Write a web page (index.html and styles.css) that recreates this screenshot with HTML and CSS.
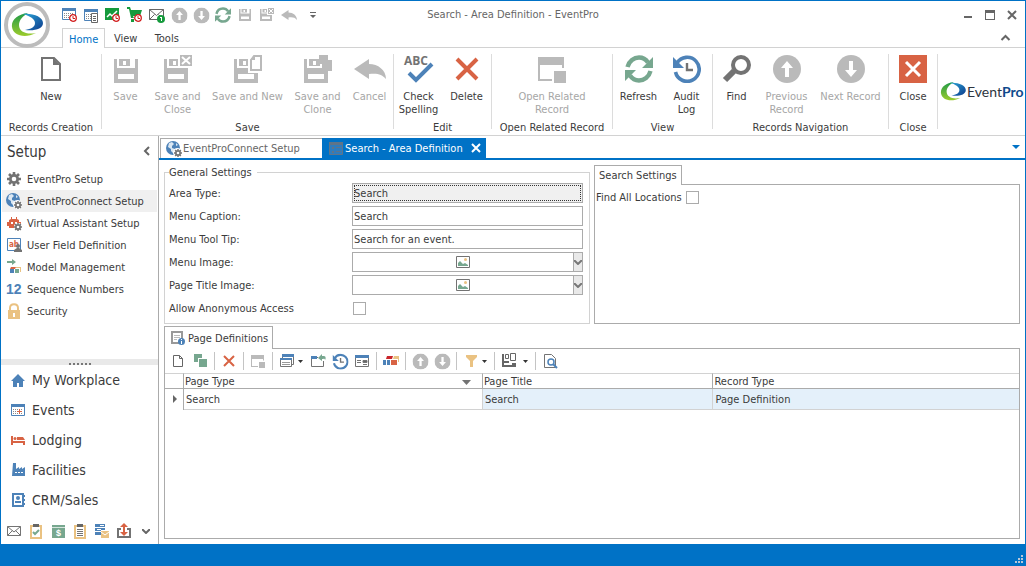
FILE: index.html
```html
<!DOCTYPE html>
<html lang="en">
<head>
  <meta charset="UTF-8" />
  <title>Search - Area Definition - EventPro</title>
  <meta name="viewport" content="width=device-width, initial-scale=1.0" />
  <link rel="stylesheet" href="styles.css">
</head>
<body>
  <!-- shared icons -->
  <svg class="sprite" aria-hidden="true">
    <defs>
      <linearGradient id="gGreen" x1="0" y1="0" x2="0" y2="1"><stop offset="0" stop-color="#1f9a48"/><stop offset="1" stop-color="#9bcb2c"/></linearGradient>
      <linearGradient id="gBlue" x1="0" y1="0" x2="1" y2="1"><stop offset="0" stop-color="#2ba6d8"/><stop offset="1" stop-color="#0d3b8c"/></linearGradient>
    </defs>
    <symbol id="swoosh" viewBox="0 0 32 25">
      <path fill="url(#gGreen)" d="M17 0C7 1 0 7 1 14c1 8 12 12 24 6C16 22 8 19 8 12 8 7 12 3 17 0z"/>
      <path fill="url(#gBlue)" d="M12 1c10-1 20 3 20 9 0 6-8 8-18 7 6-1 10-3 10-7 0-4-5-7-12-9z"/>
    </symbol>
    <symbol id="floppy" viewBox="0 0 24 24">
      <path d="M0 0h3v9h18V0h3v24H0zM4 15v5h16v-5z"/>
      <path d="M5 0h11v7H5zM9 2v4h3V2z" fill-rule="evenodd"/>
    </symbol>
    <symbol id="page" viewBox="0 0 20 24"><path fill="none" stroke="currentColor" stroke-width="2" d="M1 1h12l6 6v16H1z"/><path d="M12 1v7h7z"/></symbol>
    <symbol id="cross" viewBox="0 0 24 24"><path fill="none" stroke="currentColor" stroke-width="4" d="M2 2l20 20M22 2L2 22"/></symbol>
    <symbol id="undo" viewBox="0 0 32 20"><path d="M0 10L15 0v5c9 0 17 6 17 15-4-5-9-6-17-5v5z"/></symbol>
    <symbol id="refresh" viewBox="0 0 28 28">
      <path fill="none" stroke="currentColor" stroke-width="4.4" d="M2.500 12C4 6 9 2.500 14 2.500c4 0 7 2 9 5M25.500 16C24 22 19 25.500 14 25.500c-4 0-7-2-9-5"/>
      <path d="M28 2v11H17zM0 26V15h11z"/>
    </symbol>
    <symbol id="history" viewBox="0 0 28 28">
      <path fill="none" stroke="currentColor" stroke-width="3.600" d="M4 8a12 12 0 1 1-1.500 9"/>
      <path d="M0 2v11h11z"/><path fill="none" stroke="#737373" stroke-width="2.400" d="M14 8v7h6"/>
    </symbol>
    <symbol id="up" viewBox="0 0 28 28"><circle cx="14" cy="14" r="14"/><path fill="#fff" d="M14 6l6 7h-4v9h-4v-9H8z"/></symbol>
    <symbol id="down" viewBox="0 0 28 28"><circle cx="14" cy="14" r="14"/><path fill="#fff" d="M14 22l6-7h-4V6h-4v9H8z"/></symbol>
    <symbol id="related" viewBox="0 0 28 26"><path d="M0 0h26v11h-2V8H2v14h12v2H0z"/><path d="M16 14h12v12H16z"/></symbol>
    <symbol id="calendar" viewBox="0 0 14 12">
      <path fill="#4d82b8" d="M0 0h14v3H0z"/><path fill="none" stroke="#4d82b8" d="M.5.500h13v11H.5z"/>
      <path stroke="#8a8a8a" stroke-dasharray="1 1" d="M2 5.500h10M2 7.500h10M2 9.500h10"/>
    </symbol>
    <symbol id="clock" viewBox="0 0 8 8"><circle cx="4" cy="4" r="3.300" fill="#fff" stroke="#d11c1c" stroke-width="1.300"/><path fill="none" stroke="#d11c1c" d="M4 2v2.500h2"/></symbol>
    <symbol id="gear" viewBox="0 0 14 14">
      <path fill="none" stroke="currentColor" stroke-width="2.600" d="M7 0v14M0 7h14M2 2l10 10M12 2L2 12"/>
      <circle cx="7" cy="7" r="5"/><circle cx="7" cy="7" r="2.300" fill="#fff"/>
    </symbol>
    <symbol id="globe" viewBox="0 0 16 16">
      <circle cx="7" cy="7" r="7" fill="#4d82b8"/>
      <path fill="#dbe7f2" d="M3 2l3-1 2 2-2 2v2l3 1-2 4-2-2V8L2 6zM10 2l2 2-2 1z"/>
      <circle cx="11.500" cy="11.500" r="4.500" fill="#fff"/>
      <svg x="8" y="8" width="8" height="8" color="#737373" fill="#737373"><use href="#gear"/></svg>
    </symbol>
    <symbol id="picture" viewBox="0 0 14 12">
      <path fill="#fff" stroke="#737373" d="M.5.500h13v11H.5z"/><path fill="#77a78f" d="M2 10V7l2-2 3 3 2-1 3 2v1z"/><circle cx="9.500" cy="3.500" r="1.500" fill="#eac282"/>
    </symbol>
    <symbol id="caret" viewBox="0 0 8 5"><path fill="none" stroke="currentColor" stroke-width="2" d="M0 0l4 4 4-4"/></symbol>
  </svg>

  <div class="window">
    <header class="titlebar">
      <button class="app-button" aria-label="Application menu"><svg width="32" height="25"><use href="#swoosh"/></svg></button>
      <div class="quick-access">
        <button aria-label="Calendar"><svg viewBox="0 0 16 16"><use href="#calendar" x="1" y="1" width="14" height="12"/><use href="#clock" x="8" y="7" width="8" height="8"/></svg></button>
        <button aria-label="Event list"><svg viewBox="0 0 16 16"><use href="#calendar" x="1" y="2" width="14" height="12"/><path fill="#fff" stroke="#666" d="M8.500 6.500h6v9h-6z"/><path stroke="#666" d="M10 9.500h3M10 11.500h3M10 13.500h3"/></svg></button>
        <button aria-label="Sales"><svg viewBox="0 0 16 16"><path fill="#159a3c" d="M0 1h14v12H0z"/><path fill="none" stroke="#fff" stroke-width="1.500" d="M2 10l3-3 2 2 5-5"/><use href="#clock" x="7" y="7" width="8" height="8"/></svg></button>
        <button aria-label="Orders"><svg viewBox="0 0 16 16"><path fill="#159a3c" d="M0 0h3l1 3h11l-2 6H6L7 11H4L2 2H0zM4 12h3v3H4z"/><use href="#clock" x="7" y="7" width="8" height="8"/></svg></button>
        <button aria-label="Messages"><svg viewBox="0 0 16 16"><path fill="#fff" stroke="#666" d="M.5 2.500h14v10H.5zM.5 2.500l7 6 7-6M.5 12.500l5-5M14.500 12.500l-5-5"/><circle cx="12" cy="12" r="4" fill="#159a3c"/><path stroke="#fff" d="M12.500 10v4M11 10.500h1.500"/></svg></button>
        <button class="off" aria-label="Previous"><svg viewBox="-1 -1 30 30"><use href="#up"/></svg></button>
        <button class="off" aria-label="Next"><svg viewBox="-1 -1 30 30"><use href="#down"/></svg></button>
        <button class="green" aria-label="Refresh"><svg viewBox="0 0 28 28"><use href="#refresh"/></svg></button>
        <button class="off" aria-label="Save"><svg viewBox="0 0 16 16"><use href="#floppy" x="2" y="2" width="12" height="12"/></svg></button>
        <button class="off" aria-label="Save and close"><svg viewBox="0 0 16 16"><use href="#floppy" x="1" y="2" width="12" height="12"/><path fill="#fff" d="M8 0h8v8H8z"/><path d="M9 1h6v6H9z"/><path stroke="#fff" d="M10 2l4 4M14 2l-4 4"/></svg></button>
        <button class="off" aria-label="Undo"><svg viewBox="0 0 16 16"><use href="#undo" x="0" y="3" width="16" height="10"/></svg></button>
        <button class="customize" aria-label="Customize"><svg viewBox="0 0 16 16"><path d="M5 5h6v1H5zM5 8h6l-3 3z"/></svg></button>
      </div>
      <div class="title">Search - Area Definition - EventPro</div>
      <div class="window-buttons">
        <button aria-label="Minimize"><svg viewBox="0 0 12 12"><path d="M2 7h8v2H2z"/></svg></button>
        <button aria-label="Maximize"><svg viewBox="0 0 12 12"><path d="M1 1h10v10H1zM2 4v6h8V4z" fill-rule="evenodd"/></svg></button>
        <button aria-label="Close window"><svg viewBox="0 0 12 12"><path stroke="currentColor" stroke-width="2" d="M2 2l8 8M10 2l-8 8"/></svg></button>
      </div>
    </header>

    <nav class="ribbon-tabs">
      <button class="active">Home</button>
      <button>View</button>
      <button>Tools</button>
      <button class="collapse" aria-label="Collapse ribbon"><svg width="9" height="6" viewBox="0 0 9 6"><path fill="none" stroke="currentColor" stroke-width="2" d="M.5 5l4-4 4 4"/></svg></button>
    </nav>

    <div class="ribbon">
      <section class="group group-new">
        <div class="buttons">
          <button class="sm"><svg width="28" height="28" viewBox="0 0 28 28"><use href="#page" x="4" y="2" width="20" height="24"/></svg>New</button>
        </div>
        <h2>Records Creation</h2>
      </section>
      <section class="group group-save">
        <div class="buttons">
          <button class="sm off"><svg width="28" height="28"><use href="#floppy" x="2" y="4" width="24" height="24"/></svg>Save</button>
          <button class="md off"><svg width="28" height="28"><use href="#floppy" x="0" y="4" width="24" height="24"/><path fill="#fff" d="M14 0h14v13H14z"/><path d="M16 0h12v11H16z"/><path stroke="#fff" stroke-width="2" d="M18 2l8 7M26 2l-8 7"/></svg>Save and Close</button>
          <button class="lg off"><svg width="28" height="28"><use href="#floppy" x="0" y="4" width="24" height="24"/><path fill="#fff" d="M14 0h14v18H14z"/><path fill="#fff" stroke="currentColor" stroke-width="2" d="M20 1h7v14H17V5z"/><path d="M16 5h5V0z"/></svg>Save and New</button>
          <button class="md off"><svg width="28" height="28"><use href="#floppy" x="0" y="4" width="24" height="24"/><path d="M15 0h9v5h4v11H18v-7h-3z"/></svg>Save and Clone</button>
          <button class="sm off"><svg width="32" height="28"><use href="#undo" x="0" y="4" width="32" height="20"/></svg>Cancel</button>
        </div>
        <h2>Save</h2>
      </section>
      <section class="group group-edit">
        <div class="buttons">
          <button class="sm"><svg width="30" height="28"><text class="abc" x="0" y="10">ABC</text><path fill="none" stroke="#4d82b8" stroke-width="4" d="M5 18l7 7L28 9"/></svg>Check Spelling</button>
          <button class="sm"><svg class="red" width="28" height="28"><use href="#cross" x="2" y="2" width="24" height="24"/></svg>Delete</button>
        </div>
        <h2>Edit</h2>
      </section>
      <section class="group group-related">
        <div class="buttons">
          <button class="lg off"><svg width="28" height="28"><use href="#related" x="0" y="2" width="28" height="26"/></svg>Open Related Record</button>
        </div>
        <h2>Open Related Record</h2>
      </section>
      <section class="group group-view">
        <div class="buttons">
          <button class="sm"><svg class="green" width="28" height="28"><use href="#refresh"/></svg>Refresh</button>
          <button class="sm"><svg class="blue" width="28" height="28"><use href="#history"/></svg>Audit Log</button>
        </div>
        <h2>View</h2>
      </section>
      <section class="group group-nav">
        <div class="buttons">
          <button class="sm"><svg width="28" height="28"><circle cx="18" cy="10" r="8" fill="none" stroke="currentColor" stroke-width="4"/><path stroke="currentColor" stroke-width="6" d="M11 16L2 25"/></svg>Find</button>
          <button class="md off"><svg width="28" height="28"><use href="#up"/></svg>Previous Record</button>
          <button class="nx off"><svg width="28" height="28"><use href="#down"/></svg>Next Record</button>
        </div>
        <h2>Records Navigation</h2>
      </section>
      <section class="group group-close">
        <div class="buttons">
          <button class="sm"><svg width="28" height="28"><path fill="#d86344" d="M0 0h28v28H0z"/><path stroke="#fff" stroke-width="3" d="M7 7l14 14M21 7L7 21"/></svg>Close</button>
        </div>
        <h2>Close</h2>
      </section>
      <div class="brand"><svg width="26" height="20"><use href="#swoosh"/></svg><span>Event<b>Pro</b></span></div>
    </div>

    <div class="workspace">
      <aside class="sidebar">
        <div class="sidebar-head">
          <h1>Setup</h1>
          <button aria-label="Collapse navigation"><svg width="7" height="10" viewBox="0 0 7 10"><path fill="none" stroke="currentColor" stroke-width="2" d="M6 1L2 5l4 4"/></svg></button>
        </div>
        <ul class="setup-list">
          <li><a href="#"><svg viewBox="0 0 16 16"><use href="#gear" x="1" y="1" width="14" height="14"/></svg>EventPro Setup</a></li>
          <li class="selected"><a href="#"><svg viewBox="0 0 16 16"><use href="#globe"/></svg>EventProConnect Setup</a></li>
          <li><a href="#"><svg viewBox="0 0 16 16"><path fill="#d86344" d="M5 2h1v2h4V2h1v2l2 1v2h2v4h-2v2H3v-2H1V7h2V5l2-1z"/><path fill="#fff" d="M5 7h2v2H5zM9 7h2v2H9z"/><circle cx="12" cy="12" r="4" fill="#fff"/><use href="#gear" x="8" y="8" width="8" height="8"/></svg>Virtual Assistant Setup</a></li>
          <li><a href="#"><svg viewBox="0 0 16 16"><path fill="#fff" stroke="#4d82b8" d="M1.500 1.500h13v12h-13z"/><text class="ab" x="3" y="10">ab</text><circle cx="12" cy="9" r="2"/><path d="M8 15v-2l3-2h2l3 2v2z"/></svg>User Field Definition</a></li>
          <li><a href="#"><svg viewBox="0 0 16 16"><path fill="#77a78f" d="M1 2h5V0l4 3-4 3V4H1z"/><path fill="#4d82b8" d="M4 10h4v4H4z"/><path fill="#d86344" d="M5 8h5l-1 2H4z"/><path fill="#77a78f" d="M9 10h4v4H9z"/><path fill="#eac282" d="M10 8h5v5h-1V9h-4z"/></svg>Model Management</a></li>
          <li><a href="#"><svg viewBox="0 0 16 16"><text class="num" x="0" y="13">12</text></svg>Sequence Numbers</a></li>
          <li><a href="#"><svg viewBox="0 0 16 16"><path fill="#eac282" d="M2 7h12v9H2z"/><path fill="none" stroke="#eac282" stroke-width="2" d="M4 8V5c0-5 8-5 8 0v3"/><path fill="#fff" d="M7 10h2v4H7z"/></svg>Security</a></li>
        </ul>
        <div class="splitter"></div>
        <ul class="modules">
          <li><a href="#"><svg viewBox="0 0 16 16"><path fill="#4d82b8" d="M8 2l7 7h-2v6h-4v-4H7v4H3V9H1z"/></svg>My Workplace</a></li>
          <li><a href="#"><svg viewBox="0 0 16 16"><use href="#calendar" x="1" y="2" width="14" height="12"/><path stroke="#d86344" d="M9.500 7v5M7 9.500h5"/></svg>Events</a></li>
          <li><a href="#"><svg viewBox="0 0 16 16"><path fill="#d86344" d="M1 4h2v5h12v4h-2v-2H3v2H1zM7 5h6l2 3H7z"/><circle cx="5" cy="6.500" r="1.500" fill="#d86344"/></svg>Lodging</a></li>
          <li><a href="#"><svg viewBox="0 0 16 16"><path fill="#4d82b8" d="M3 1h3v6l3-2v2l3-2v2l3-2v9H2z"/><path fill="#fff" d="M5 10h2v1H5zM8 10h2v1H8zM11 10h2v1h-2z"/></svg>Facilities</a></li>
          <li><a href="#"><svg viewBox="0 0 16 16"><path fill="none" stroke="#4d82b8" stroke-width="2" d="M3 2h10v12H3z"/><circle cx="8" cy="6" r="2" fill="#4d82b8"/><path fill="#4d82b8" d="M5 11V9h6v2zM14 3h1v2h-1zM14 7h1v2h-1zM14 11h1v2h-1z"/></svg>CRM/Sales</a></li>
        </ul>
        <div class="module-icons">
          <button aria-label="Mail"><svg viewBox="0 0 16 16"><path fill="none" stroke="#737373" d="M1.500 3.500h13v9h-13zM1.500 3.500L8 9l6.500-5.500M1.500 12.500l5-5M14.500 12.500l-5-5"/></svg></button>
          <button aria-label="Tasks"><svg viewBox="0 0 16 16"><path fill="#fff" stroke="#eac282" stroke-width="2" d="M3 3h10v12H3z"/><path d="M5 1h6v3H5z"/><path fill="none" stroke="#77a78f" stroke-width="2" d="M5 9l2 2 4-4"/></svg></button>
          <button aria-label="Accounting"><svg viewBox="0 0 16 16"><path fill="#77a78f" d="M2 2h13v13H2z"/><path fill="#d6e5dd" d="M2 4h13v1H2z"/><text class="dollar" x="6" y="13">$</text></svg></button>
          <button aria-label="Reports"><svg viewBox="0 0 16 16"><path fill="#fff" stroke="#eac282" stroke-width="2" d="M3 3h10v12H3z"/><path d="M5 1h6v3H5z"/><path stroke="#737373" d="M5 6.500h6M5 8.500h6M5 10.500h6M5 12.500h6"/></svg></button>
          <button aria-label="Server mail"><svg viewBox="0 0 16 16"><path fill="#4d82b8" d="M1 1h10v6H7v5H1z"/><path stroke="#fff" d="M1 4.500h10M1 8.500h6M6 2.500h4M3 6.500h4"/><path fill="#eac282" d="M7 8h8v7H7z"/><path fill="none" stroke="#fff" d="M7 9l4 3 4-3"/></svg></button>
          <button aria-label="Export"><svg viewBox="0 0 16 16"><path fill="none" stroke="#737373" stroke-width="2" d="M5 6H2v8h12V6h-3"/><path fill="#d86344" d="M8 0l4 4H9v5h3l-4 4-4-4h3V4H4z"/></svg></button>
          <button aria-label="More"><svg viewBox="0 0 16 16"><use href="#caret" x="4" y="6" width="8" height="5"/></svg></button>
        </div>
      </aside>

      <main class="content">
        <div class="doc-tabs">
          <button class="doc-tab"><svg width="16" height="16"><use href="#globe"/></svg>EventProConnect Setup</button>
          <button class="doc-tab current"><svg width="14" height="13" viewBox="0 0 14 13"><path fill="#2f7cbd" stroke="#5f7488" d="M.5.500h13v12H.5z"/><path fill="#5f7488" d="M0 0h14v3H0zM3 5h2v2H3zM3 9h2v2H3zM7 5h5v1H7zM7 9h5v1H7z"/></svg>Search - Area Definition<svg class="close" width="8" height="8" viewBox="0 0 8 8"><path stroke="#fff" stroke-width="2" d="M0 0l8 8M8 0L0 8"/></svg></button>
          <button class="doc-menu" aria-label="Open documents"><svg width="8" height="4" viewBox="0 0 8 4"><path d="M0 0h8L4 4z"/></svg></button>
        </div>

        <div class="panels">
          <div class="top-panels">
            <fieldset class="general">
              <legend>General Settings</legend>
              <label for="areaType">Area Type:</label>
              <input id="areaType" class="readonly" type="text" value="Search" readonly>
              <label for="menuCaption">Menu Caption:</label>
              <input id="menuCaption" type="text" value="Search">
              <label for="menuTip">Menu Tool Tip:</label>
              <input id="menuTip" type="text" value="Search for an event.">
              <label for="menuImage">Menu Image:</label>
              <button id="menuImage" class="image-edit"><svg width="14" height="12"><use href="#picture"/></svg><span class="drop"><svg width="8" height="5"><use href="#caret"/></svg></span></button>
              <label for="titleImage">Page Title Image:</label>
              <button id="titleImage" class="image-edit"><svg width="14" height="12"><use href="#picture"/></svg><span class="drop"><svg width="8" height="5"><use href="#caret"/></svg></span></button>
              <label for="anonymous">Allow Anonymous Access</label>
              <input id="anonymous" type="checkbox">
            </fieldset>

            <section class="tabbed">
              <button class="panel-tab">Search Settings</button>
              <div class="panel-body search-body">
                <label for="findAll">Find All Locations</label>
                <input id="findAll" type="checkbox">
              </div>
            </section>
          </div>

          <section class="tabbed pages">
            <button class="panel-tab page-tab"><svg width="14" height="14" viewBox="0 0 14 14"><path fill="#fff" stroke="#999" stroke-width="2" d="M1 1h10v11H1z"/><path stroke="#bbb" d="M3 4.500h6M3 6.500h6M3 8.500h3"/><circle cx="10.500" cy="10.500" r="3.500" fill="#4d82b8"/><path stroke="#fff" d="M10.500 8v1M10.500 10v3"/></svg>Page Definitions</button>
            <div class="panel-body">
              <div class="toolbar">
                <button aria-label="New page"><svg viewBox="0 0 16 16"><path fill="none" stroke="currentColor" d="M3.500 2.500h6l3 3v8h-9zM9.500 2.500v3h3"/></svg></button>
                <button aria-label="Clone page"><svg viewBox="0 0 16 16"><path fill="#77a78f" d="M2 1h8v4H6v4H2zM7 6h8v8H7z"/></svg></button>
                <hr>
                <button class="red" aria-label="Delete page"><svg viewBox="0 0 16 16"><use href="#cross" x="2" y="2" width="12" height="12"/></svg></button>
                <hr>
                <button class="off" aria-label="Open related"><svg viewBox="0 0 16 16"><use href="#related" x="1" y="2" width="14" height="13"/></svg></button>
                <hr>
                <button class="split" aria-label="Forms"><svg viewBox="0 0 16 16"><path fill="#fff" stroke="#737373" d="M3.500 2.500h11v9h-11z"/><path fill="#fff" stroke="#737373" d="M1.500 5.500h11v8h-11z"/><path fill="#4d82b8" d="M3 1h12v3H3zM1 5h12v2H1z"/><path stroke="#999" d="M3 9.500h8M3 11.500h8"/></svg><svg class="arrow" viewBox="0 0 5 3"><path d="M0 0h5L2.500 3z"/></svg></button>
                <button aria-label="Export"><svg viewBox="0 0 16 16"><path fill="none" stroke="#737373" d="M8 4.500H1.500v9h12V8"/><path fill="#4d82b8" d="M1 3h6v3H1z"/><path fill="#77a78f" d="M8 5l4-4v2h2c2 0 2 3 1 4 0-2-2-1-3-1v2z"/></svg></button>
                <button class="blue" aria-label="History"><svg viewBox="-1 -1 30 30"><use href="#history"/></svg></button>
                <button aria-label="Layout"><svg viewBox="0 0 16 16"><path fill="#fff" stroke="#737373" d="M1.500 2.500h13v11h-13z"/><path fill="#4d82b8" d="M1 2h14v3H1z"/><path stroke="#737373" d="M3 7.500h4M3 9.500h4M9 7.500h4v2H9zM9 11.500h4"/></svg></button>
                <hr>
                <button aria-label="Categories"><svg viewBox="0 0 16 16"><path fill="#c9252b" d="M4 3h6l-1 3H3z"/><path fill="#eac282" d="M11 3h5v6h-1V6h-5z"/><path fill="#4d82b8" d="M0 7h7v5H0z"/><path fill="#d86344" d="M8 7h6v5H8z"/><path stroke="#fff" d="M3.500 7v5"/></svg></button>
                <hr>
                <button class="off" aria-label="Move up"><svg viewBox="-1 -1 30 30"><use href="#up"/></svg></button>
                <button class="off" aria-label="Move down"><svg viewBox="-1 -1 30 30"><use href="#down"/></svg></button>
                <hr>
                <button class="split" aria-label="Filter"><svg viewBox="0 0 16 16"><path fill="#eac282" d="M3 2h11v2L10 8v6H7V8L3 4z"/></svg><svg class="arrow" viewBox="0 0 5 3"><path d="M0 0h5L2.500 3z"/></svg></button>
                <hr>
                <button class="split wide" aria-label="Save layout"><svg viewBox="0 0 16 16"><path d="M1 1h2v7h12v6H1zM3 10v2h8v-2z" fill-rule="evenodd"/><path fill="none" stroke="currentColor" d="M4.500 1.500h3v4h-3z"/><path fill="#fff" d="M8 0h8v10H8z"/><path fill="none" stroke="currentColor" d="M9.500.500h5v7h-5z"/></svg><svg class="arrow" viewBox="0 0 5 3"><path d="M0 0h5L2.500 3z"/></svg></button>
                <hr>
                <button aria-label="Preview"><svg viewBox="0 0 16 16"><path fill="none" stroke="#737373" d="M2.500 1.500h7l4 4v9h-11z"/><circle cx="9" cy="9" r="3" fill="#fff" stroke="#4d82b8" stroke-width="1.500"/><path stroke="#4d82b8" stroke-width="2" d="M11 11l4 4"/></svg></button>
              </div>
              <table>
                <thead>
                  <tr><th class="mark"></th><th class="type">Page Type<svg class="sort" width="9" height="5" viewBox="0 0 9 5"><path d="M0 0h9L4.500 5z"/></svg></th><th class="name">Page Title</th><th>Record Type</th></tr>
                </thead>
                <tbody>
                  <tr><td class="mark"><svg width="4" height="8" viewBox="0 0 4 8"><path d="M0 0l4 4-4 4z"/></svg></td><td class="focused">Search</td><td>Search</td><td>Page Definition</td></tr>
                </tbody>
              </table>
            </div>
          </section>
        </div>
      </main>
    </div>

    <footer class="statusbar">
      <svg width="8" height="8" viewBox="0 0 8 8"><path d="M6 0h2v2H6zM3 3h2v2H3zM6 3h2v2H6zM0 6h2v2H0zM3 6h2v2H3zM6 6h2v2H6z"/></svg>
    </footer>
  </div>
</body>
</html>
```
FILE: styles.css
```css
* {
  box-sizing: border-box;
}
body {
  margin: 0;
  font: 11px/13px "DejaVu Sans Condensed", "DejaVu Sans", sans-serif;
  color: #3b3b3b;
  background: #fff;
}
button, input {
  font: inherit;
  color: inherit;
  margin: 0;
}
button {
  background: none;
  border: 0;
  padding: 0;
}
a {
  color: inherit;
  text-decoration: none;
}
svg {
  fill: currentColor;
  flex: none;
  overflow: visible;
}
h1, h2, ul {
  margin: 0;
  padding: 0;
  font-weight: normal;
  list-style: none;
}
.sprite {
  position: absolute;
  width: 0;
  height: 0;
}
.green { color: #77a78f; }
.blue { color: #4d82b8; }
.red { color: #d86344; }

.window {
  display: flex;
  flex-direction: column;
  min-height: 100vh;
  border: 1px solid #0072c6;
  border-bottom: 0;
}

/* title bar */
.titlebar {
  position: relative;
  display: flex;
  justify-content: space-between;
  align-items: center;
  height: 27px;
  padding: 0 7px 0 60px;
}
.app-button {
  position: absolute;
  left: 3px;
  top: 1px;
  z-index: 1;
  width: 46px;
  height: 46px;
  border: 4px solid #bcbcbc;
  border-radius: 50%;
  background: #fff;
  display: flex;
  align-items: center;
  justify-content: center;
}
.quick-access {
  display: flex;
  gap: 6px;
  color: #666;
}
.quick-access button,
.quick-access svg {
  display: block;
  width: 16px;
  height: 16px;
}
.quick-access .off { color: #bababa; }
.quick-access .green { color: #77a78f; }
.quick-access .customize { margin-left: 2px; }
.title {
  position: absolute;
  left: 0;
  right: 0;
  text-align: center;
  color: #666;
  pointer-events: none;
}
.window-buttons {
  display: flex;
  gap: 10px;
  color: #666;
}
.window-buttons svg {
  display: block;
  width: 12px;
  height: 12px;
}

/* ribbon */
.ribbon-tabs {
  display: flex;
  align-items: stretch;
  height: 20px;
  padding: 0 15px 0 61px;
  border-bottom: 1px solid #d2d2d2;
}
.ribbon-tabs button {
  padding: 2px 6px 0;
  min-width: 41px;
}
.ribbon-tabs .active {
  height: 20px;
  border: 1px solid #d2d2d2;
  border-bottom: 0;
  background: #fff;
  color: #0072c6;
}
.ribbon-tabs .collapse {
  min-width: 0;
  margin-left: auto;
  padding: 0;
  color: #666;
}
.ribbon {
  display: flex;
  height: 88px;
  padding: 6px 0;
  border-bottom: 1px solid #d2d2d2;
}
.group {
  display: flex;
  flex-direction: column;
  justify-content: space-between;
  border-right: 1px solid #dcdcdc;
}
.group h2 {
  height: 8px;
  font-size: 11px;
  text-align: center;
  white-space: nowrap;
}
.buttons {
  display: flex;
  justify-content: center;
  gap: 2px;
  padding-top: 1px;
}
.buttons button {
  display: flex;
  flex-direction: column;
  align-items: center;
  gap: 7px;
}
.buttons .off { color: #a6a6a6; }
.buttons .off svg { color: #bababa; }
.buttons svg { color: #737373; }
.buttons .red { color: #d86344; }
.buttons .green { color: #77a78f; }
.buttons .blue { color: #4d82b8; }
.sm { width: 46px; }
.md { width: 54px; }
.lg { width: 82px; }
.nx { width: 74px; }
.group-new { width: 101px; }
.group-save { width: 292px; }
.group-edit { width: 98px; }
.group-related { width: 121px; }
.group-view { width: 100px; }
.group-nav { width: 176px; }
.group-nav .buttons { gap: 0; }
.group-close { width: 49px; }
.abc {
  font: bold 12px "Open Sans", sans-serif;
}
.brand {
  display: flex;
  align-items: center;
  gap: 1px;
  padding-left: 2px;
  font: 14px/20px Lato, sans-serif;
  color: #2d3540;
}
.brand b { color: #0f4a8c; }

/* navigation */
.workspace {
  display: flex;
  flex: 1;
}
.sidebar {
  display: flex;
  flex-direction: column;
  width: 158px;
  border-right: 1px solid #ababab;
}
.sidebar-head {
  display: flex;
  align-items: center;
  justify-content: space-between;
  height: 32px;
  padding: 0 8px 0 6px;
  color: #666;
}
.sidebar h1 {
  font-size: 15px;
  color: #3b3b3b;
}
.sidebar a {
  display: flex;
  align-items: center;
  white-space: nowrap;
}
.sidebar a svg {
  width: 16px;
  height: 16px;
  color: #737373;
}
.setup-list {
  flex: 1;
  padding: 0 1px;
}
.setup-list a {
  height: 22px;
  gap: 5px;
  padding-left: 4px;
}
.selected { background: #f0f0f0; }
.ab {
  font: bold 8px "DejaVu Sans Condensed", sans-serif;
  fill: #d86344;
}
.num {
  font: bold 14px "Liberation Sans", sans-serif;
  fill: #4d82b8;
}
.dollar {
  font: bold 9px "Liberation Sans", sans-serif;
  fill: #fff;
}
.splitter {
  height: 6px;
  background: #e9e9e9;
}
.splitter::after {
  content: "";
  display: block;
  width: 22px;
  height: 4px;
  margin: 0 auto;
  border-bottom: 2px dotted #777;
}
.modules a {
  height: 30px;
  gap: 6px;
  padding-left: 9px;
  font-size: 14px;
}
.module-icons {
  display: flex;
  align-items: flex-start;
  gap: 6px;
  height: 29px;
  padding: 8px 0 0 5px;
  color: #666;
}
.module-icons svg {
  display: block;
  width: 16px;
  height: 16px;
}

/* documents */
.content {
  display: flex;
  flex-direction: column;
  flex: 1;
  min-width: 0;
}
.doc-tabs {
  display: flex;
  height: 24px;
  padding: 2px 5px 0 1px;
  border-bottom: 2px solid #0072c6;
}
.doc-tab {
  display: flex;
  align-items: center;
  gap: 1px;
  min-width: 162px;
  padding-left: 5px;
  border: 1px solid #ababab;
  border-width: 1px 0 0 1px;
  color: #666;
}
.doc-tab.current {
  gap: 2px;
  padding: 0 6px 0 7px;
  border: 0;
  background: #0072c6;
  color: #fff;
}
.doc-tab .close { margin-left: 7px; }
.doc-menu {
  display: flex;
  align-items: center;
  padding-bottom: 3px;
  margin-left: auto;
  color: #0072c6;
}
.panels {
  display: flex;
  flex-direction: column;
  flex: 1;
  gap: 2px;
  padding: 5px;
}
.top-panels {
  display: grid;
  grid-template-columns: 1fr 1fr;
  gap: 4px;
}
.general {
  display: grid;
  grid-template-columns: 183px 1fr;
  grid-auto-rows: 20px;
  row-gap: 3px;
  align-items: center;
  min-width: 0;
  margin: 0;
  padding: 4px 6px 5px 4px;
  border: 1px solid #d2d2d2;
}
.general legend {
  padding: 1px 5px 0 0;
}
input[type="text"],
.image-edit {
  width: 100%;
  height: 20px;
  padding: 0 1px;
  border: 1px solid #ababab;
  background: #fff;
}
.general .readonly {
  background: #f0f0f0;
  outline: 1px dotted #333;
  outline-offset: -3px;
}
.image-edit {
  display: flex;
  align-items: center;
  justify-content: center;
  padding: 0;
}
.image-edit > svg { margin: 0 auto; }
.drop {
  display: flex;
  align-items: center;
  justify-content: center;
  width: 9px;
  height: 18px;
  border-left: 1px solid #ababab;
  background: #e9e9e9;
  color: #777;
}
.drop svg { overflow: hidden; }
input[type="checkbox"] {
  appearance: none;
  width: 13px;
  height: 13px;
  margin: 0 0 0 1px;
  border: 1px solid #ababab;
  background: #fff;
}
.tabbed {
  display: flex;
  flex-direction: column;
  align-items: flex-start;
}
.panel-tab {
  position: relative;
  height: 20px;
  padding: 0 4px;
  margin-bottom: -1px;
  border: 1px solid #ababab;
  border-bottom: 0;
  background: #fff;
}
.panel-body {
  flex: 1;
  width: 100%;
  border: 1px solid #ababab;
}
.search-body {
  display: flex;
  align-items: flex-start;
  gap: 3px;
  padding: 6px 1px;
}
.pages { flex: 1; }
.page-tab {
  display: flex;
  align-items: center;
  gap: 3px;
  height: 23px;
  padding-left: 6px;
}
.toolbar {
  display: flex;
  align-items: center;
  gap: 6px;
  height: 24px;
  padding-left: 5px;
  color: #666;
}
.toolbar button {
  display: flex;
  align-items: center;
}
.toolbar svg {
  width: 16px;
  height: 16px;
}
.toolbar hr {
  width: 1px;
  height: 18px;
  margin: 0;
  border: 0;
  background: #c4c4c4;
}
.toolbar .split {
  gap: 3px;
  margin-right: 1px;
}
.toolbar .wide { gap: 6px; }
.toolbar .arrow {
  width: 5px;
  height: 3px;
  color: #333;
}
.toolbar .off { color: #bababa; }
.toolbar .blue { color: #4d82b8; }
.toolbar .red { color: #d86344; }
table {
  width: 100%;
  border-collapse: separate;
  border-spacing: 0;
  table-layout: fixed;
}
th {
  height: 16px;
  padding: 0 1px;
  border-top: 1px solid #d2d2d2;
  border-bottom: 1px solid #ababab;
  border-right: 1px solid #ababab;
  font-weight: normal;
  text-align: left;
}
td {
  height: 21px;
  padding: 0 2px;
  border-bottom: 1px solid #d2d2d2;
  border-right: 1px solid #d2d2d2;
  background: #e4f0fa;
}
th:last-child,
td:last-child { border-right: 0; }
.mark { width: 19px; }
td.mark {
  padding: 0 7px 0 8px;
  border-right-color: #ababab;
  border-bottom: 0;
  background: #fff;
  color: #666;
}
.type { width: 35%; }
.name { width: 27%; }
.sort {
  float: right;
  margin: 5px 10px 0 0;
  color: #737373;
}
td.focused { background: #fff; }

.statusbar {
  display: flex;
  align-items: flex-end;
  justify-content: flex-end;
  height: 22px;
  padding: 0 2px 3px;
  background: #0072c6;
  color: #b8c8d8;
}
```
